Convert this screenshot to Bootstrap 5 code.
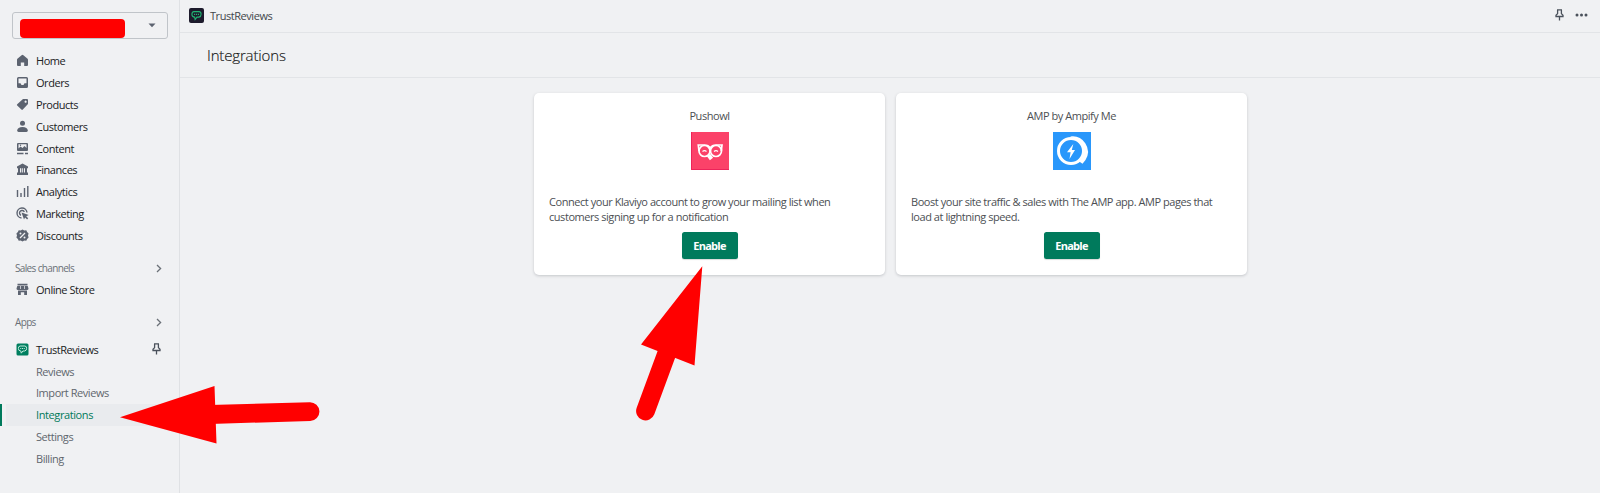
<!DOCTYPE html>
<html lang="en">
<head>
<meta charset="utf-8">
<meta name="viewport" content="width=device-width, initial-scale=1">
<title>TrustReviews - Integrations</title>
<link href="https://cdn.jsdelivr.net/npm/bootstrap@5.3.0/dist/css/bootstrap.min.css" rel="stylesheet">
<style>
body{font-family:"Open Sans","Noto Sans",sans-serif;font-size:11px;letter-spacing:-.45px;line-height:15px;background:#f0f1f3;color:#202223;height:493px;overflow:hidden}
.side{width:180px;border-right:1px solid #dfe1e4}
.store{width:156px;height:27px;margin:12px 0 0 12px;border:1.5px solid #c0c4c9;border-radius:3px;padding:0 11px 0 6.5px}
.redact{width:105px;height:19px;background:#f00;border-radius:4px;margin-top:6px}
.side .nav-link{color:#202223;height:21.8px;padding:0 18px 0 16px;gap:7px}
.side svg.ic{width:13px;height:13px;color:#5c6370;flex:none}
.side .sub .nav-link{padding-left:36px;color:#5f666d}
.side .sub .nav-link.active{color:#007a5a;background:linear-gradient(90deg,#007a5c 2px,#f0f1f3 2px,#f0f1f3 6px,#e9ebee 6px);font-weight:500;letter-spacing:-.4px}
.sect{font-size:10px;letter-spacing:-.65px;color:#6a7077;height:22px;padding:0 17.5px 0 15px}
.topbar{height:33px;border-bottom:1.5px solid #e2e4e7;padding:0 12px 1.5px 9px;color:#43474b}
.title-row{height:45px;border-bottom:1.5px solid #e2e4e7;padding:0 0 1px 27px}
.title-row h1{font-size:15px;font-weight:300;letter-spacing:-.15px;line-height:20px;color:#111;-webkit-text-stroke:.15px #222}
.tile{width:351px;height:182px;border:0;border-radius:5px;box-shadow:0 1px 3px rgba(40,50,60,.22);padding:15px 15px 0;color:#4c4f53}
.tile p{height:30px}
.tile svg{margin:9px 0 23.5px}
.btn-enable{width:56px;height:27px;margin-top:8.5px;background:#007a5c;color:#fff!important;font-size:11px;font-weight:700;letter-spacing:-.75px;border:0;border-radius:2.5px;padding:0;line-height:26px;box-shadow:0 1px 1px rgba(0,0,0,.15)}
.notes{left:0;top:0;pointer-events:none}
</style>
</head>
<body>
<svg class="d-none">
<symbol id="pin" viewBox="0 0 9 12"><path d="M2 .8h5M2.600 1v3.600L1 6.200v1.300h7V6.200L6.400 4.600V1M4.500 7.500v4" fill="none" stroke="currentColor" stroke-width="1.300"/></symbol>
<symbol id="chev" viewBox="0 0 6 9"><path d="M1 1l3.600 3.500L1 8" fill="none" stroke="currentColor" stroke-width="1.300"/></symbol>
<symbol id="chat" viewBox="0 0 12 12"><path d="M3.200 1.800h5.600Q11 2 11 4.600T8.600 7.800H6.500L4.500 10.400 4 7.800Q1 7.600 1 4.800T3.200 1.800z" fill="none" stroke="currentColor" stroke-width="1.200"/><path d="M3.300 4.800h1.200M5.400 4.800h1.200M7.500 4.800h1.200" stroke="currentColor" stroke-width="1.200"/></symbol>
</svg>
<div class="d-flex h-100">
<aside class="side flex-shrink-0">
  <div class="store d-flex justify-content-between align-items-start">
    <div class="redact"></div>
    <svg class="mt-2" width="8" height="8" viewBox="0 0 8 8"><path d="M.5 2.500h7L4 6.300z" fill="#5c6370"/></svg>
  </div>
  <nav class="nav flex-column flex-nowrap" style="margin-top:11px">
    <a class="nav-link d-flex align-items-center"><svg class="ic" viewBox="0 0 13 13"><path fill="currentColor" d="M6.500.8Q7 .8 7.400 1.200L11.600 4.800Q12 5.200 12 6v5Q12 12 11 12H8.200V8.500H4.800V12H2Q1 12 1 11V6Q1 5.200 1.400 4.800L5.600 1.200Q6 .8 6.500.8z"/></svg>Home</a>
    <a class="nav-link d-flex align-items-center"><svg class="ic" viewBox="0 0 13 13"><path fill="currentColor" fill-rule="evenodd" d="M2.500 1h8Q12 1 12 2.500v8Q12 12 10.500 12h-8Q1 12 1 10.500v-8Q1 1 2.500 1zM2.500 2.500v4.800h2L5.500 9h2L8.500 7.300h2V2.500z"/></svg>Orders</a>
    <a class="nav-link d-flex align-items-center"><svg class="ic" viewBox="0 0 13 13"><path fill="currentColor" fill-rule="evenodd" d="M7 1h4q1 0 1 1v4L6.800 11.600q-.7.700-1.400 0L1.200 7.600q-.7-.7 0-1.400zM9.600 2.600a1.100 1.100 0 1 0 .01 0z"/></svg>Products</a>
    <a class="nav-link d-flex align-items-center"><svg class="ic" viewBox="0 0 13 13" fill="currentColor"><circle cx="6.500" cy="3.300" r="2.500"/><path d="M1.200 10.600Q1.500 7 6.500 7t5.300 3.600Q11.800 12 10.500 12h-8Q1.200 12 1.200 10.600z"/></svg>Customers</a>
    <a class="nav-link d-flex align-items-center"><svg class="ic" viewBox="0 0 13 13"><path fill="currentColor" fill-rule="evenodd" d="M2 1h9q1 0 1 1v6q0 1-1 1H2Q1 9 1 8V2q0-1 1-1zM2.500 2.300v4.200l2-2 2 1.500 2-2 2 2V2.300z"/><circle cx="4.500" cy="3.300" r=".7" fill="currentColor"/><path d="M1 11.500h6.500M9 11.500h3" stroke="currentColor" stroke-width="1.400"/></svg>Content</a>
    <a class="nav-link d-flex align-items-center"><svg class="ic" viewBox="0 0 13 13" fill="currentColor"><path d="M6.500.6L12 3.600v1.600H1V3.600zM2 5h2v5H2zM5.300 5h.9v5h-.9zM7 5h.9v5H7zM9 5h2v5H9zM1 9.600h11V12H1z"/></svg>Finances</a>
    <a class="nav-link d-flex align-items-center"><svg class="ic" viewBox="0 0 13 13"><path d="M1.500 5v7M5 8v4M8.500 3v9M11.800 1v11" stroke="currentColor" stroke-width="1.400"/></svg>Analytics</a>
    <a class="nav-link d-flex align-items-center"><svg class="ic" viewBox="0 0 13 13"><path d="M5.500 11A5 5 0 1 1 11 5.500M5 8.300A2.500 2.500 0 1 1 8.300 5" fill="none" stroke="currentColor" stroke-width="1.400"/><path fill="currentColor" d="M5.500 5.500l7.300 2.600-2.600 1.200 2 2-1.100 1.100-2-2L8 12.600z"/></svg>Marketing</a>
    <a class="nav-link d-flex align-items-center"><svg class="ic" viewBox="0 0 13 13"><path fill="currentColor" d="M6.500.4l1.800 1 2-.1.800 1.800 1.500 1.400-.6 2 .6 2-1.500 1.400-.8 1.800-2-.1-1.800 1-1.800-1-2 .1-.8-1.800L.4 8.500 1 6.500l-.6-2 1.500-1.400.8-1.800 2 .1z"/><path d="M4 9l5-5" stroke="#f0f1f3" stroke-width="1.200"/><circle cx="4.500" cy="4.500" r="1" fill="#f0f1f3"/><circle cx="8.500" cy="8.500" r="1" fill="#f0f1f3"/></svg>Discounts</a>
  </nav>
  <div class="sect d-flex align-items-center justify-content-between" style="margin-top:11px">Sales channels<svg width="6" height="9"><use href="#chev"/></svg></div>
  <nav class="nav flex-column" style="margin-top:-1px"><a class="nav-link d-flex align-items-center"><svg class="ic" viewBox="0 0 13 13"><path fill="currentColor" d="M1.500.8h10v1.700h-10zM1.300 3.100h10.400l.8 2.400Q12.500 7 11 7H2Q.5 7 .5 5.500zM2 7.400h9V12H8.200V9.200H4.800V12H2z"/><path d="M4.500 3v3M8.500 3v3" stroke="#f0f1f3" stroke-width=".7"/></svg>Online Store</a></nav>
  <div class="sect d-flex align-items-center justify-content-between" style="margin-top:12px">Apps<svg width="6" height="9"><use href="#chev"/></svg></div>
  <nav class="nav flex-column" style="margin-top:4.500px"><a class="nav-link d-flex align-items-center"><svg class="ic" viewBox="0 0 13 13"><rect x=".5" y=".5" width="12" height="12" rx="1.500" fill="#007f5f"/><use href="#chat" x="1.500" y="1.500" width="10" height="10" color="#bfeadb"/></svg>TrustReviews<svg class="ms-auto" width="9" height="12" style="color:#4a515b"><use href="#pin"/></svg></a></nav>
  <nav class="nav flex-column sub">
    <a class="nav-link d-flex align-items-center">Reviews</a>
    <a class="nav-link d-flex align-items-center">Import Reviews</a>
    <a class="nav-link active d-flex align-items-center">Integrations</a>
    <a class="nav-link d-flex align-items-center">Settings</a>
    <a class="nav-link d-flex align-items-center">Billing</a>
  </nav>
</aside>
<main class="flex-grow-1">
  <header class="topbar d-flex align-items-center">
    <svg width="15" height="15" viewBox="0 0 15 15"><rect width="15" height="15" rx="2" fill="#1d1b2c"/><use href="#chat" x="2" y="2" width="11" height="11" color="#21b573"/></svg>
    <span style="margin-left:6px">TrustReviews</span>
    <svg class="ms-auto" width="9" height="12" style="color:#4a515b"><use href="#pin"/></svg>
    <svg width="13" height="4" style="margin-left:11px" fill="#4a515b"><circle cx="2" cy="2" r="1.500"/><circle cx="6.500" cy="2" r="1.500"/><circle cx="11" cy="2" r="1.500"/></svg>
  </header>
  <div class="title-row d-flex align-items-center"><h1 class="m-0">Integrations</h1></div>
  <section class="d-flex justify-content-center" style="gap:11px;padding:15px 0 0 1px">
    <article class="card tile align-items-center">
      <div>Pushowl</div>
      <svg width="38" height="38" viewBox="0 0 38 38"><rect width="38" height="38" fill="#fb4269"/><path d="M.5 0v37.500H38" fill="none" stroke="#ee235a"/><g fill="none" stroke="#fff" stroke-width="1.700"><circle cx="13.500" cy="19" r="5.500"/><circle cx="25" cy="19" r="5.500"/><path d="M8 19L7.300 13h6.200q4 0 5.700 3Q21 13 25 13h6l-.7 6"/><path d="M11.500 19.500q2-1.800 4 0M23 19.500q2-1.800 4 0" stroke-width="1.100"/><path d="M17.500 23l3 4" stroke-width="4"/></g></svg>
      <p class="m-0 w-100">Connect your Klaviyo account to grow your mailing list when<br>customers signing up for a notification</p>
      <button class="btn btn-enable">Enable</button>
    </article>
    <article class="card tile align-items-center">
      <div>AMP by Ampify Me</div>
      <svg width="38" height="38" viewBox="0 0 38 38"><rect width="38" height="38" fill="#2997fb"/><circle cx="18" cy="19" r="12.500" fill="none" stroke="#fff" stroke-width="3"/><path d="M17 4.500A15.500 15.500 0 0 1 32.500 28L29.500 31.800 25.500 29A14 14 0 0 0 25 8z" fill="#fff"/><path d="M20.300 12L14 20.200h3.600L16.500 27 22 18H18.800z" fill="#fff"/></svg>
      <p class="m-0 w-100">Boost your site traffic &amp; sales with The AMP app. AMP pages that<br>load at lightning speed.</p>
      <button class="btn btn-enable">Enable</button>
    </article>
  </section>
</main>
</div>
<svg class="notes position-absolute" width="1600" height="493" fill="#f00" stroke="#f00" stroke-linecap="round">
  <path stroke="none" d="M120 417.300L214.500 386 216.500 443.500zM702.300 266.300L641 344.500 694.500 365.500z"/>
  <path stroke-width="18.800" d="M210 414.500L310 411.600M668 350L645.500 411"/>
</svg>
<script src="https://cdn.jsdelivr.net/npm/bootstrap@5.3.0/dist/js/bootstrap.bundle.min.js"></script>
</body>
</html>
